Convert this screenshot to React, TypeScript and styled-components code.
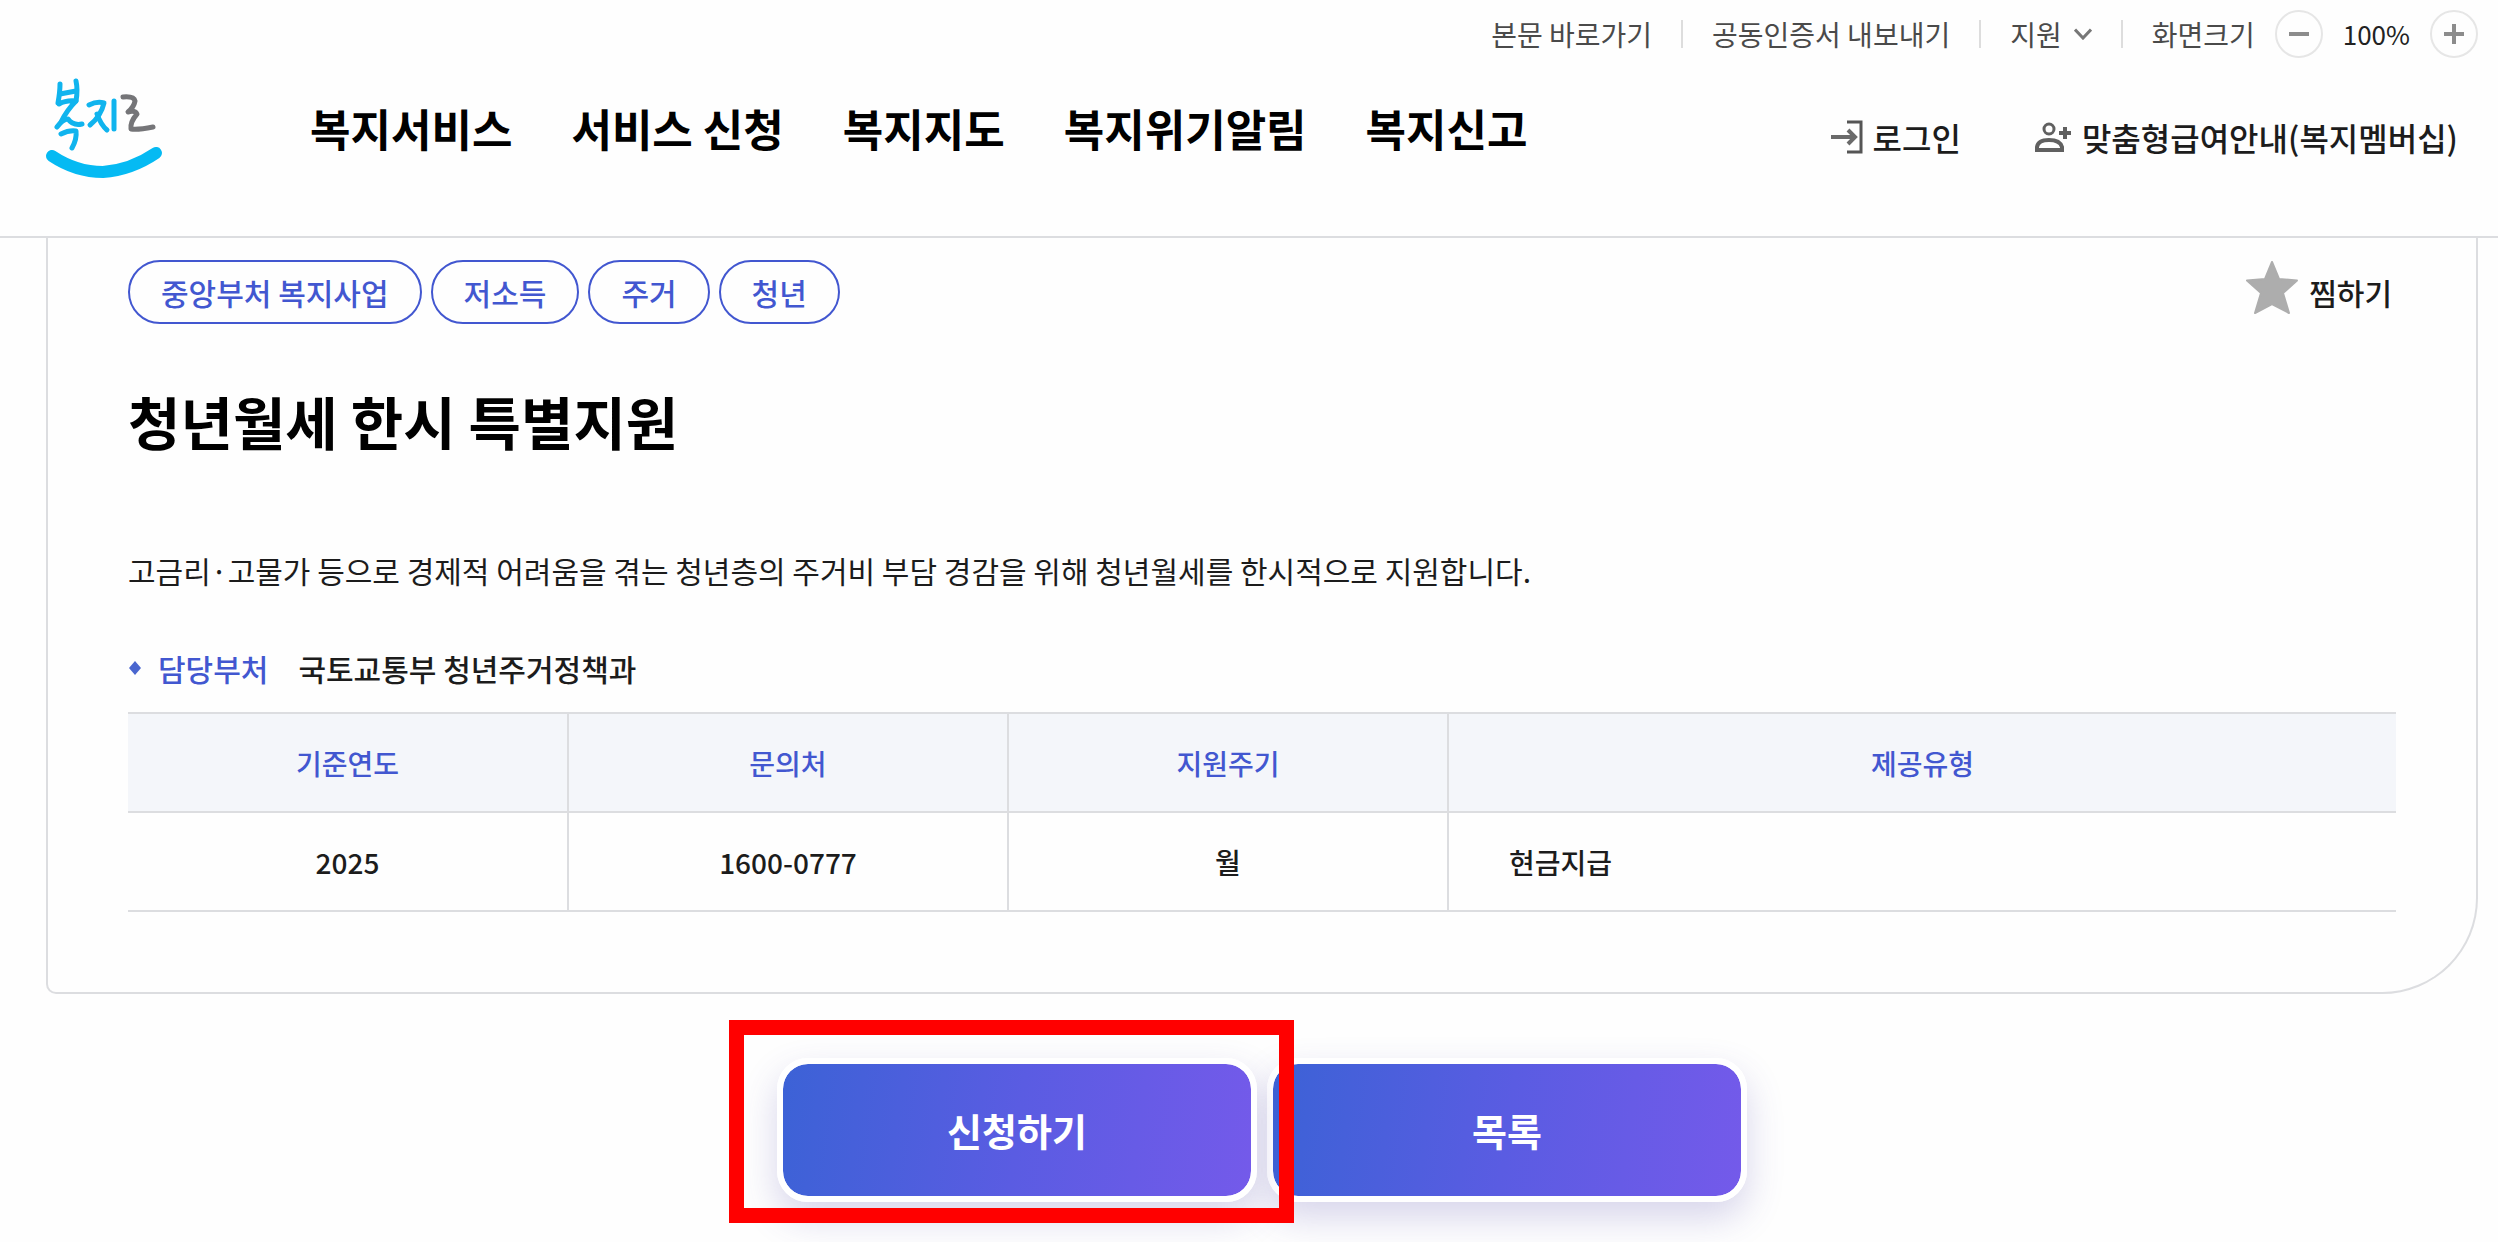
import React, { useState } from "react";
import styled, { createGlobalStyle } from "styled-components";

const line = "#dcdde0";
const blue = "#4257d0";

const GlobalStyle = createGlobalStyle`
  *, *::before, *::after { box-sizing: border-box; }
  body {
    margin: 0;
    background: #fefefe;
    color: #1c1c1c;
    font-family: "Noto Sans CJK KR", "Noto Sans", sans-serif;
    font-size: 30px;
    line-height: 44px;
  }
  h1, p, dl, dd, ul { margin: 0; padding: 0; }
  ul { list-style: none; }
  a { color: inherit; text-decoration: none; }
  button { font: inherit; color: inherit; background: none; border: 0; padding: 0; cursor: pointer; }
`;

const Header = styled.header`
  border-bottom: 2px solid ${line};
`;

const Utility = styled.div`
  display: flex;
  justify-content: flex-end;
  align-items: center;
  gap: 20px;
  padding: 10px 20px;
  font-size: 28px;
  color: #4a4a4a;
`;

const UtilityList = styled.ul`
  display: flex;
  align-items: center;
`;

const UtilityItem = styled.li`
  display: flex;
  align-items: center;
  & + &::before {
    content: "";
    width: 2px;
    height: 28px;
    margin: 0 29px;
    background: #dddddd;
  }
`;

const SupportButton = styled.button`
  display: flex;
  align-items: center;
  gap: 12px;
`;

const Zoom = styled.div`
  display: flex;
  align-items: center;
  gap: 20px;
`;

const ZoomValue = styled.span`
  font-size: 26px;
  color: #222222;
`;

const RoundButton = styled.button`
  display: grid;
  place-items: center;
  width: 48px;
  height: 48px;
  border: 2px solid #e6e6e6;
  border-radius: 50%;
`;

const MainBar = styled.div`
  display: flex;
  align-items: center;
  padding: 8px 20px 56px 42px;
`;

const LogoLink = styled.a`
  display: block;
  width: 124px;
  height: 104px;
`;

const Nav = styled.nav`
  margin-left: 144px;
  ul {
    display: flex;
    gap: 59px;
  }
  a {
    font-size: 44px;
    line-height: 60px;
    font-weight: 700;
    color: #000000;
  }
`;

const UserLinks = styled.div`
  display: flex;
  gap: 74px;
  margin-left: auto;
  padding: 18px 20px 0 0;
`;

const UserLink = styled.a`
  display: flex;
  align-items: center;
  gap: 10px;
  font-size: 32px;
  font-weight: 500;
`;

const Main = styled.main`
  padding: 0 20px 40px 46px;
`;

const Card = styled.section`
  padding: 22px 80px 80px;
  border: 2px solid ${line};
  border-top: 0;
  border-radius: 0 0 96px 10px;
`;

const CardTop = styled.div`
  display: flex;
  justify-content: space-between;
  align-items: center;
`;

const Tags = styled.ul`
  display: flex;
  gap: 9px;
`;

const Tag = styled.li`
  padding: 8px 31px;
  border: 2px solid ${blue};
  border-radius: 32px;
  color: ${blue};
  font-weight: 500;
`;

const WishButton = styled.button`
  display: flex;
  align-items: center;
  gap: 10px;
  padding-right: 4px;
  font-weight: 500;
  svg { margin-bottom: 8px; }
`;

const Title = styled.h1`
  margin-top: 57px;
  font-size: 57px;
  line-height: 78px;
  font-weight: 700;
  color: #000000;
`;

const Summary = styled.p`
  margin-top: 89px;
`;

const Department = styled.dl`
  display: flex;
  align-items: center;
  margin-top: 54px;
  font-weight: 500;
  dt {
    display: flex;
    align-items: center;
    gap: 16px;
    color: ${blue};
  }
  dd { margin-left: 30px; }
`;

const InfoTable = styled.table`
  width: 100%;
  margin-top: 22px;
  border-collapse: collapse;
  table-layout: fixed;
  font-size: 28px;
`;

const Cell = styled.td<{ $start?: boolean }>`
  height: 99px;
  padding: 0 60px;
  border: 2px solid ${line};
  border-width: 2px 0 2px 2px;
  text-align: ${(p) => (p.$start ? "left" : "center")};
  font-weight: 500;
  &:first-child { border-left: 0; }
`;

const HeadCell = styled(Cell)<{ $width?: string }>`
  width: ${(p) => p.$width ?? "auto"};
  background: #f4f6fa;
  color: ${blue};
`;

const Actions = styled.div`
  display: flex;
  justify-content: center;
  gap: 10px;
  margin-top: 64px;
`;

const ActionSlot = styled.div`
  position: relative;
`;

const ActionButton = styled.button`
  width: 480px;
  height: 144px;
  border: 6px solid #ffffff;
  border-radius: 31px;
  background: linear-gradient(98deg, #3c62d6 0%, #5a5ce2 50%, #745aea 100%) padding-box;
  box-shadow: 0 16px 36px rgba(76, 70, 170, 0.22);
  color: #ffffff;
  font-size: 38px;
  font-weight: 700;
`;

const Highlight = styled.span`
  position: absolute;
  z-index: 1;
  inset: -38px -37px -21px -48px;
  border: 15px solid #ff0000;
  pointer-events: none;
`;

const Logo = () => (
  <svg width="124" height="104" viewBox="42 76 124 104" fill="none" strokeLinecap="round" strokeLinejoin="round">
    <g stroke="#10b4ee" strokeWidth="5">
      <path d="M60 84 Q60 92 58 103" />
      <path d="M76 81 Q78 90 76 101" />
      <path d="M60 94 L76 91" />
      <path d="M59 104 Q66 100 76 101 Q67 110 61 122" />
      <path d="M57 127 Q63 119 68 119 Q73 126 82 124" />
      <path d="M61 134 Q69 130 76 131 Q77 139 72 148" />
      <path d="M89 105 Q97 101 104 103 Q101 116 90 125" />
      <path d="M97 114 Q101 125 107 130" />
      <path d="M114 101 L114 129" />
    </g>
    <path d="M123 97 Q134 96 135 101 Q134 107 128 112 Q135 110 137 114 Q130 122 131 129 Q138 130 153 127" stroke="#757578" strokeWidth="5" />
    <path d="M52 156 Q76 172 103 172 Q131 170 156 153" stroke="#05baf3" strokeWidth="12" />
  </svg>
);

const Chevron = () => (
  <svg width="18" height="12" viewBox="0 0 18 12" fill="none" stroke="#777777" strokeWidth="3">
    <path d="M1 1.5 L9 10 L17 1.5" />
  </svg>
);

const Sign = ({ plus }: { plus?: boolean }) => (
  <svg width="20" height="20" viewBox="0 0 20 20" stroke="#8c8c8c" strokeWidth="4">
    <path d={plus ? "M0 10H20M10 0V20" : "M0 10H20"} />
  </svg>
);

const LoginIcon = () => (
  <svg width="32" height="34" viewBox="0 0 32 34" fill="none" stroke="#555555" strokeWidth="3">
    <path d="M16 2H30V32H16" />
    <path d="M0 17H23M17 10L24 17L17 24" stroke="#6a6a6a" strokeWidth="4" />
  </svg>
);

const MemberIcon = () => (
  <svg width="37" height="32" viewBox="0 0 37 32" fill="none" stroke="#606060" strokeWidth="3">
    <circle cx="14" cy="8" r="5" />
    <path d="M2 29V26Q3 19 14 19Q25 19 27 26V29Z" strokeWidth="4" />
    <path d="M24 12H36M30 6V18" strokeWidth="4" />
  </svg>
);

const StarIcon = () => (
  <svg width="54" height="54" viewBox="0 0 54 54" fill="#adadad" stroke="#adadad" strokeWidth="2" strokeLinejoin="round">
    <path d="M27 1L34 18L52 19.500L38 32L44 52L27 43L10 52L16 32L2 19.500L20 18Z" />
  </svg>
);

const DiamondIcon = () => (
  <svg width="14" height="14" viewBox="0 0 14 14" fill="#4a66cf">
    <path d="M7 0L13 7L7 14L1 7Z" />
  </svg>
);

const menu = ["복지서비스", "서비스 신청", "복지지도", "복지위기알림", "복지신고"];
const tags = ["중앙부처 복지사업", "저소득", "주거", "청년"];

export default function App() {
  const [scale, setScale] = useState(100);
  return (
    <>
      <GlobalStyle />
      <Header>
        <Utility>
          <UtilityList>
            <UtilityItem><a href="#content">본문 바로가기</a></UtilityItem>
            <UtilityItem><a href="#cert">공동인증서 내보내기</a></UtilityItem>
            <UtilityItem><SupportButton type="button">지원<Chevron /></SupportButton></UtilityItem>
            <UtilityItem>화면크기</UtilityItem>
          </UtilityList>
          <Zoom>
            <RoundButton type="button" aria-label="축소" onClick={() => setScale((s) => s - 10)}><Sign /></RoundButton>
            <ZoomValue>{scale}%</ZoomValue>
            <RoundButton type="button" aria-label="확대" onClick={() => setScale((s) => s + 10)}><Sign plus /></RoundButton>
          </Zoom>
        </Utility>
        <MainBar>
          <LogoLink href="#home" aria-label="복지로"><Logo /></LogoLink>
          <Nav>
            <ul>
              {menu.map((m) => <li key={m}><a href="#menu">{m}</a></li>)}
            </ul>
          </Nav>
          <UserLinks>
            <UserLink href="#login"><LoginIcon />로그인</UserLink>
            <UserLink href="#membership"><MemberIcon />맞춤형급여안내(복지멤버십)</UserLink>
          </UserLinks>
        </MainBar>
      </Header>
      <Main id="content">
        <Card>
          <CardTop>
            <Tags>{tags.map((t) => <Tag key={t}>{t}</Tag>)}</Tags>
            <WishButton type="button"><StarIcon />찜하기</WishButton>
          </CardTop>
          <Title>청년월세 한시 특별지원</Title>
          <Summary>고금리·고물가 등으로 경제적 어려움을 겪는 청년층의 주거비 부담 경감을 위해 청년월세를 한시적으로 지원합니다.</Summary>
          <Department>
            <dt><DiamondIcon />담당부처</dt>
            <dd>국토교통부 청년주거정책과</dd>
          </Department>
          <InfoTable>
            <thead>
              <tr>
                <HeadCell as="th" scope="col" $width="19.4%">기준연도</HeadCell>
                <HeadCell as="th" scope="col" $width="19.4%">문의처</HeadCell>
                <HeadCell as="th" scope="col" $width="19.4%">지원주기</HeadCell>
                <HeadCell as="th" scope="col">제공유형</HeadCell>
              </tr>
            </thead>
            <tbody>
              <tr>
                <Cell>2025</Cell>
                <Cell>1600-0777</Cell>
                <Cell>월</Cell>
                <Cell $start>현금지급</Cell>
              </tr>
            </tbody>
          </InfoTable>
        </Card>
        <Actions>
          <ActionSlot>
            <ActionButton type="button">신청하기</ActionButton>
            <Highlight />
          </ActionSlot>
          <ActionButton type="button">목록</ActionButton>
        </Actions>
      </Main>
    </>
  );
}
